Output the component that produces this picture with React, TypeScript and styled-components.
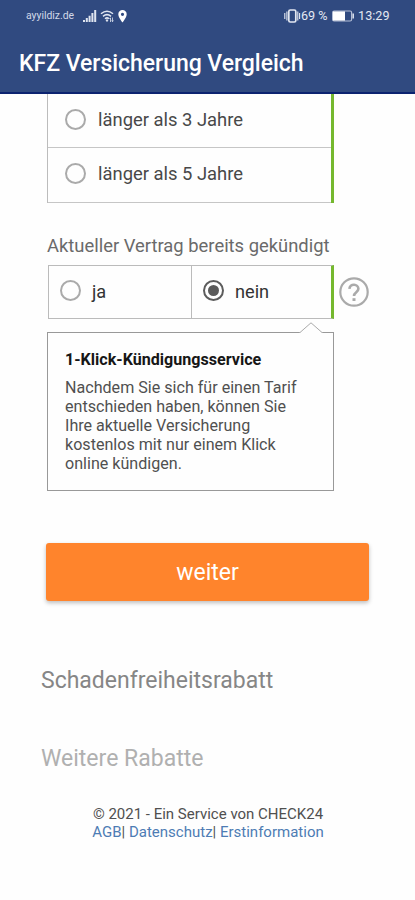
import React from 'react';
import styled, { createGlobalStyle } from 'styled-components';

const GlobalStyle = createGlobalStyle`
  * { box-sizing: border-box; }
  body { margin: 0; background: #fefefe; font-family: Roboto, sans-serif; color: #444; }
  p, h1, h2, h3 { margin: 0; font-weight: 400; }
`;

const Screen = styled.div`
  width: 415px;
  height: 900px;
  overflow: hidden;
  display: flex;
  flex-direction: column;
`;

const Header = styled.header`
  height: 94px;
  flex: none;
  background: #304a80;
  border-bottom: 2px solid #0c2370;
  color: #fff;
`;

const StatusBar = styled.div`
  height: 32px;
  padding: 0 25px 0 26px;
  display: flex;
  align-items: center;
  justify-content: space-between;
  color: #e3e8f2;
`;

const StatusGroup = styled.div<{ $gap?: number }>`
  display: flex;
  align-items: center;
  gap: ${(p) => p.$gap ?? 0}px;
  svg { display: block; }
`;

const Carrier = styled.span`
  font-size: 10.4px;
  width: 54px;
  line-height: 14px;
  color: #d0d8e8;
`;

const StatusText = styled.span<{ $width: number }>`
  width: ${(p) => p.$width}px;
  font-size: 12.6px;
  line-height: 14px;
  white-space: nowrap;
`;

const Title = styled.h1`
  padding: 17px 0 0 19px;
  font-size: 23px;
  line-height: 30px;
  font-weight: 500;
  letter-spacing: -0.03px;
  white-space: nowrap;
`;

const OptionList = styled.div`
  width: 287px;
  height: 109px;
  margin-left: 47px;
  flex: none;
  border-left: 1px solid #bcbcbc;
  border-right: 3px solid #75b82e;
`;

const OptionRow = styled.label<{ $height: number }>`
  height: ${(p) => p.$height}px;
  padding: 0 0 3px 17px;
  display: flex;
  align-items: center;
  gap: 12px;
  border-bottom: 1px solid #c6c6c6;
  font-size: 18.4px;
  white-space: nowrap;
  color: #484848;
`;

const SectionLabel = styled.h2`
  margin: 31px 0 0 47px;
  font-size: 18.4px;
  line-height: 24px;
  color: #6a6a6a;
  white-space: nowrap;
`;

const ChoiceLine = styled.div`
  display: flex;
  align-items: center;
  gap: 5px;
  margin: 7px 0 0 48px;
`;

const ChoiceBox = styled.div`
  display: grid;
  grid-template-columns: 143px 1fr;
  width: 286px;
  height: 54px;
  border: 1px solid #bbb;
  border-right: 3px solid #75b82e;
`;

const Ring = styled.span<{ $selected?: boolean }>`
  width: 21px;
  height: 21px;
  flex: none;
  border: 2px solid ${(p) => (p.$selected ? '#5c5c5c' : '#aaa')};
  border-radius: 50%;
  display: grid;
  place-items: center;
`;

const Choice = styled.label`
  padding: 0 0 1px 11px;
  display: flex;
  align-items: center;
  gap: 11px;
  font-size: 18.2px;
  color: #333;
  & + & { border-left: 1px solid #bbb; margin-left: -1px; }
  ${Ring} { margin-bottom: 2px; }
`;

const Dot = styled.span`
  width: 11px;
  height: 11px;
  border-radius: 50%;
  background: #5a5a5a;
`;

const Notice = styled.section`
  position: relative;
  width: 287px;
  height: 159px;
  flex: none;
  margin: 13px 0 0 47px;
  padding: 17px 17px 0;
  border: 1px solid #999;
  font-size: 16.1px;
  line-height: 19px;
  color: #505050;
`;

const NoticeArrow = styled.svg`
  position: absolute;
  top: -12px;
  right: 10px;
`;

const NoticeTitle = styled.h3`
  margin-bottom: 8px;
  line-height: 20px;
  font-size: 16.1px;
  font-weight: 700;
  color: #161616;
  white-space: nowrap;
`;

const NoticeLine = styled.p`
  white-space: nowrap;
`;

const NextButton = styled.button`
  width: 323px;
  height: 58px;
  flex: none;
  margin: 52px 0 0 46px;
  padding: 1px 0 0;
  border: 0;
  border-radius: 3px;
  background: #ff842c;
  box-shadow: 0 2px 4px rgba(0, 0, 0, 0.26);
  color: #fff;
  font: 400 23px/30px Roboto, sans-serif;
`;

const StepTitle = styled.h2<{ $faded?: boolean }>`
  margin: ${(p) => (p.$faded ? 48 : 65)}px 0 0 41px;
  font-size: 23px;
  line-height: 30px;
  color: ${(p) => (p.$faded ? '#b0b0b0' : '#868686')};
`;

const Footer = styled.footer`
  margin-top: 31px;
  padding-left: 1px;
  text-align: center;
  font-size: 15px;
  line-height: 18px;
  color: #505050;
`;

const FooterLink = styled.a`
  color: #4d7cb4;
`;

function SignalIcon() {
  return (
    <svg width="14" height="13" viewBox="0 0 14 13" fill="#dfe5f0">
      <path d="M0 10h2v2H0zM2.8 8h2v4h-2zM5.6 5.7h2V12h-2zM8.4 3h2v9h-2zM11.2 0h2v12h-2z" />
    </svg>
  );
}

function WifiIcon() {
  return (
    <svg width="15" height="13" viewBox="0 0 15 13" fill="none" stroke="#dfe5f0" strokeWidth="1.5">
      <path d="M1 3.8Q7 -1.4 13 3.8M3 6.3Q7 3 11 6.3M5 8.7Q7 7 9 8.7" />
      <path d="M6 10h2l-1 1.5z" fill="#dfe5f0" strokeWidth="1" />
      <path d="M10.5 8v4M9.5 9l1-1.3M12.5 7.5v4M11.6 10.5l.9 1.2.9-1.2" strokeWidth=".8" />
    </svg>
  );
}

function PinIcon() {
  return (
    <svg width="9" height="13" viewBox="0 0 9 13" fill="#fff">
      <path fillRule="evenodd" d="M4.5 0A4.2 4.2 0 0 0 .3 4.2C.3 7.4 4.5 12.5 4.5 12.5S8.7 7.4 8.7 4.2A4.2 4.2 0 0 0 4.5 0zm0 2.7a1.6 1.6 0 1 1 0 3.2 1.6 1.6 0 0 1 0-3.2z" />
    </svg>
  );
}

function VibrateIcon() {
  return (
    <svg width="17" height="14" viewBox="0 0 17 14" fill="none" stroke="#e3e8f2">
      <rect x="4.8" y="1" width="7" height="12" rx="1.5" strokeWidth="1.7" />
      <path d="M2.9 2.5v9M.8 4v6M13.8 2.5v9M15.6 4v6" strokeWidth="1.1" />
    </svg>
  );
}

function BatteryIcon() {
  return (
    <svg width="23" height="12" viewBox="0 0 23 12">
      <rect x=".6" y="1" width="19" height="10" rx="1.5" fill="none" stroke="#b3bed6" strokeWidth="1.2" />
      <path d="M1 1.4h12v9.2H1z" fill="#fff" />
      <path d="M21.2 3.5v5" stroke="#d5dcea" strokeWidth="1.6" />
    </svg>
  );
}

function HelpIcon() {
  return (
    <svg width="31" height="31" viewBox="0 0 31 31" fill="none" stroke="#aaa">
      <circle cx="15" cy="15" r="13.7" strokeWidth="2.2" />
      <path d="M10.4 11.8A4.5 4.5 0 0 1 15 7.7a4.3 4.3 0 0 1 4.4 4.1c0 3.4-4.4 3.4-4.4 7.1" strokeWidth="2.6" />
      <path d="M13.5 21.2h3V24h-3z" fill="#aaa" stroke="none" />
    </svg>
  );
}

const noticeLines = [
  'Nachdem Sie sich für einen Tarif',
  'entschieden haben, können Sie',
  'Ihre aktuelle Versicherung',
  'kostenlos mit nur einem Klick',
  'online kündigen.',
];

export default function App() {
  return (
    <Screen>
      <GlobalStyle />
      <Header>
        <StatusBar>
          <StatusGroup $gap={3}>
            <Carrier>ayyildiz.de</Carrier>
            <SignalIcon />
            <WifiIcon />
            <PinIcon />
          </StatusGroup>
          <StatusGroup>
            <VibrateIcon />
            <StatusText $width={31}>69 %</StatusText>
            <BatteryIcon />
            <StatusText $width={35}>&nbsp;13:29</StatusText>
          </StatusGroup>
        </StatusBar>
        <Title>KFZ Versicherung Vergleich</Title>
      </Header>

      <OptionList>
        <OptionRow $height={54}><Ring />länger als 3 Jahre</OptionRow>
        <OptionRow $height={55}><Ring />länger als 5 Jahre</OptionRow>
      </OptionList>

      <SectionLabel>Aktueller Vertrag bereits gekündigt</SectionLabel>
      <ChoiceLine>
        <ChoiceBox>
          <Choice><Ring />ja</Choice>
          <Choice><Ring $selected><Dot /></Ring>nein</Choice>
        </ChoiceBox>
        <HelpIcon />
      </ChoiceLine>

      <Notice>
        <NoticeArrow width="24" height="13" viewBox="0 0 24 13">
          <path d="M1 13V11.5L12 1.8L23 11.5V13z" fill="#fefefe" />
          <path d="M0 11.5H1L12 1.8L23 11.5H24" fill="none" stroke="#aaa" />
        </NoticeArrow>
        <NoticeTitle>1-Klick-Kündigungsservice</NoticeTitle>
        {noticeLines.map((line) => <NoticeLine key={line}>{line}</NoticeLine>)}
      </Notice>

      <NextButton>weiter</NextButton>
      <StepTitle>Schadenfreiheitsrabatt</StepTitle>
      <StepTitle $faded>Weitere Rabatte</StepTitle>

      <Footer>
        <p>© 2021 - Ein Service von CHECK24</p>
        <p>
          <FooterLink>AGB</FooterLink>| <FooterLink>Datenschutz</FooterLink>| <FooterLink>Erstinformation</FooterLink>
        </p>
      </Footer>
    </Screen>
  );
}
